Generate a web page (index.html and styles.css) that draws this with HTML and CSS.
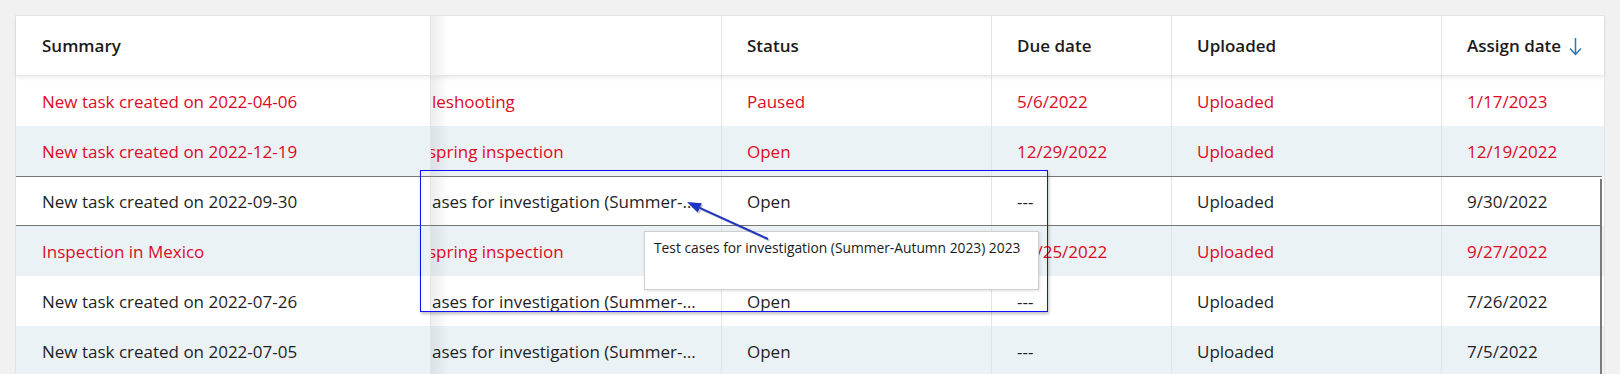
FILE: index.html
```html
<!DOCTYPE html>
<html lang="en">
<head>
<meta charset="utf-8">
<title>Tasks</title>
<link rel="stylesheet" href="styles.css">
</head>
<body>
<div class="page">
  <div class="card">
    <div class="row head">
      <div class="cell c1">Summary</div>
      <div class="cell c2"></div>
      <div class="cell">Status</div>
      <div class="cell">Due date</div>
      <div class="cell">Uploaded</div>
      <div class="cell last">Assign date
        <svg class="sort" width="13" height="19" viewBox="0 0 13 19"><path d="M6.5 1 V17.5 M1 11.5 L6.5 17.5 L12 11.5" fill="none" stroke="#2a7ab0" stroke-width="1.5"/></svg>
      </div>
    </div>
    <div class="row red">
      <div class="cell c1">New task created on 2022-04-06</div>
      <div class="cell c2"><span class="clip">leshooting</span></div>
      <div class="cell">Paused</div>
      <div class="cell">5/6/2022</div>
      <div class="cell">Uploaded</div>
      <div class="cell last">1/17/2023</div>
    </div>
    <div class="row red alt">
      <div class="cell c1">New task created on 2022-12-19</div>
      <div class="cell c2"><span class="clip cut">spring inspection</span></div>
      <div class="cell">Open</div>
      <div class="cell">12/29/2022</div>
      <div class="cell">Uploaded</div>
      <div class="cell last">12/19/2022</div>
    </div>
    <div class="row sel">
      <div class="cell c1">New task created on 2022-09-30</div>
      <div class="cell c2"><span class="clip">ases for investigation (Summer-…</span></div>
      <div class="cell">Open</div>
      <div class="cell">---</div>
      <div class="cell">Uploaded</div>
      <div class="cell last">9/30/2022</div>
    </div>
    <div class="row red alt">
      <div class="cell c1">Inspection in Mexico</div>
      <div class="cell c2"><span class="clip cut">spring inspection</span></div>
      <div class="cell"></div>
      <div class="cell">10/25/2022</div>
      <div class="cell">Uploaded</div>
      <div class="cell last">9/27/2022</div>
    </div>
    <div class="row">
      <div class="cell c1">New task created on 2022-07-26</div>
      <div class="cell c2"><span class="clip">ases for investigation (Summer-…</span></div>
      <div class="cell">Open</div>
      <div class="cell">---</div>
      <div class="cell">Uploaded</div>
      <div class="cell last">7/26/2022</div>
    </div>
    <div class="row alt">
      <div class="cell c1">New task created on 2022-07-05</div>
      <div class="cell c2"><span class="clip">ases for investigation (Summer-…</span></div>
      <div class="cell">Open</div>
      <div class="cell">---</div>
      <div class="cell">Uploaded</div>
      <div class="cell last">7/5/2022</div>
    </div>
  </div>

  <div class="scrollbar"></div>
  <div class="tooltip">Test cases for investigation (Summer-Autumn 2023) 2023</div>
  <div class="frame"></div>
  <svg class="pointer" width="1620" height="374" viewBox="0 0 1620 374">
    <g transform="translate(1.5 1.5)" fill="rgba(0,0,0,0.22)" stroke="rgba(0,0,0,0.22)">
      <path d="M768 239 L699.7 207.8" stroke-width="2" fill="none"/>
      <path d="M687 202 L701.8 203.3 L697.6 212.4 Z" stroke="none"/>
    </g>
    <path d="M768 239 L699.7 207.8" stroke="#1f33c4" stroke-width="2" fill="none"/>
    <path d="M687 202 L701.8 203.3 L697.6 212.4 Z" fill="#1f33c4"/>
  </svg>
</div>
</body>
</html>
```

FILE: styles.css
```css
* { box-sizing: border-box; }

html, body {
  margin: 0;
  background: #f1f1f1;
}

body {
  font-family: "Open Sans", "Noto Sans", sans-serif;
  font-size: 17px;
  color: #1f1f1f;
  width: 1620px;
  height: 374px;
  overflow: hidden;
}

.page {
  position: relative;
  padding: 15px 15px 0;
  height: 374px;
}

.card {
  background: #ffffff;
  border: 1px solid #e4e4e4;
  border-bottom: none;
  width: 1590px;
}

.row {
  display: grid;
  grid-template-columns: 415px 291px 270px 180px 270px 162px;
  height: 50px;
  background: #ffffff;
}

.row.alt { background: #ebf2f5; }

.row.red { color: #dc0a26; }

.row.head {
  height: 60px;
  position: relative;
  z-index: 1;
  font-weight: 600;
  color: #1b1b1b;
  border-bottom: 1px solid #e6e6e6;
  box-shadow: 0 2px 4px rgba(0, 0, 0, 0.07);
}

.row.sel {
  border-top: 1px solid #767676;
  border-bottom: 1px solid #767676;
  margin-right: 2px;
}

.cell {
  display: flex;
  align-items: center;
  padding-left: 25px;
  border-right: 1px solid #e4e4e4;
  white-space: nowrap;
  overflow: hidden;
}

.cell.c1 { padding-left: 26px; }

.cell.c2 {
  padding-left: 0;
  background-image: linear-gradient(to right, rgba(0, 0, 0, 0.07), rgba(0, 0, 0, 0) 18px);
}

.cell.last { border-right: none; }

.clip { margin-left: 1px; }
.clip.cut { margin-left: -3px; }

.sort {
  margin-left: 8px;
  margin-top: 2px;
}

.scrollbar {
  position: absolute;
  left: 1600px;
  top: 179px;
  width: 2px;
  height: 200px;
  background: #7a7a7a;
}

.tooltip {
  position: absolute;
  left: 644px;
  top: 231px;
  width: 395px;
  height: 59px;
  background: #ffffff;
  border: 1px solid #cfcfcf;
  box-shadow: 1px 1px 3px rgba(0, 0, 0, 0.12);
  padding: 6px 0 0 9px;
  font-size: 13.8px;
  color: #1a1a1a;
  z-index: 3;
  white-space: nowrap;
}

.frame {
  position: absolute;
  left: 420px;
  top: 170px;
  width: 628px;
  height: 142px;
  border: 1px solid #1010ff;
  box-shadow: 1px 2px 3px rgba(0, 0, 0, 0.25);
  z-index: 4;
}

.pointer {
  position: absolute;
  left: 0;
  top: 0;
  z-index: 5;
}
```
